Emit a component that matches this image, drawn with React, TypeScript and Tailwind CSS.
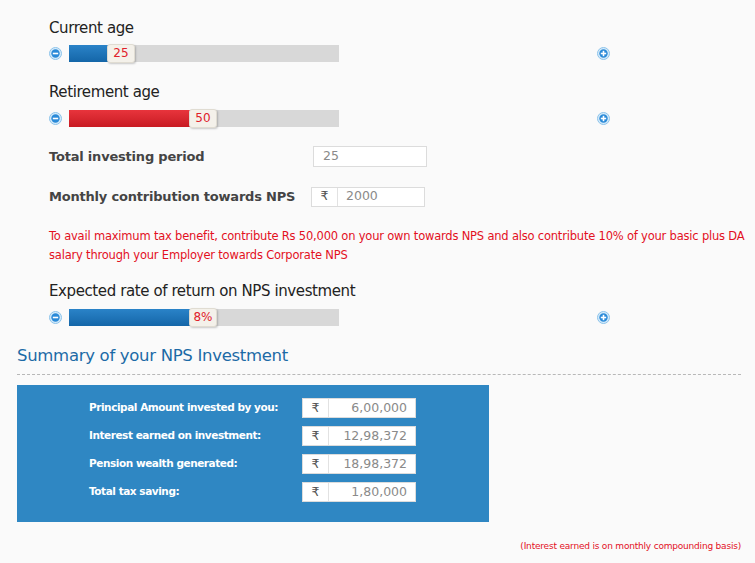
import React from 'react';

function MinusIcon() {
  return (
    <svg width="13" height="13" viewBox="0 0 13 13">
      <circle cx="6.5" cy="6.5" r="6" fill="#d6ebfa" stroke="#8cc3ea" />
      <circle cx="6.5" cy="6.5" r="4.2" fill="#2a8ad8" />
      <rect x="3.8" y="5.7" width="5.4" height="1.6" fill="#fff" />
    </svg>
  );
}

function PlusIcon() {
  return (
    <svg width="13" height="13" viewBox="0 0 13 13">
      <circle cx="6.5" cy="6.5" r="6" fill="#d6ebfa" stroke="#8cc3ea" />
      <circle cx="6.5" cy="6.5" r="4.2" fill="#2a8ad8" />
      <rect x="3.8" y="5.7" width="5.4" height="1.6" fill="#fff" />
      <rect x="5.7" y="3.8" width="1.6" height="5.4" fill="#fff" />
    </svg>
  );
}

interface SliderProps {
  fill: number;
  value: string;
  red?: boolean;
}

function Slider({ fill, value, red }: SliderProps) {
  return (
    <div className="flex items-center h-[18px]">
      <div className="w-[20px] flex items-center">
        <MinusIcon />
      </div>
      <div className="relative w-[270px] h-[17px] bg-[#d8d8d8]">
        <div
          className={
            red
              ? 'h-full bg-gradient-to-b from-[#e8343c] to-[#c81a22]'
              : 'h-full bg-gradient-to-b from-[#2a83c8] to-[#1466a8]'
          }
          style={{ width: fill }}
        />
        <div
          className="absolute top-[-1px] h-[19px] w-[28px] rounded-[3px] bg-[#f4f1ea] border border-[#e0dcd2] shadow-[1px_1px_2px_rgba(0,0,0,0.2)] flex items-center justify-center text-[12px] text-[#e0202a]"
          style={{ left: fill - 1 }}
        >
          {value}
        </div>
      </div>
      <div className="ml-[258px] flex items-center">
        <PlusIcon />
      </div>
    </div>
  );
}

function RupeeBox({ value, right }: { value: string; right?: boolean }) {
  return (
    <div className="flex h-[20px] w-[114px] bg-white border border-[#dcdcdc] text-[12.5px] text-[#8a8a8a]">
      <div className="w-[26px] flex items-center justify-center text-[#555] border-r border-[#e2e2e2]">₹</div>
      <div className={right ? 'flex-1 flex items-center justify-end pr-[8px]' : 'flex-1 flex items-center pl-[8px]'}>
        {value}
      </div>
    </div>
  );
}

const summary = [
  ['Principal Amount invested by you:', '6,00,000'],
  ['Interest earned on investment:', '12,98,372'],
  ['Pension wealth generated:', '18,98,372'],
  ['Total tax saving:', '1,80,000'],
];

export default function App() {
  return (
    <div className="w-[755px] h-[563px] bg-[#fafafa] text-[#222] font-['DejaVu_Sans',sans-serif] overflow-hidden">
      <div className="pl-[49px] pt-[18px]">
        <div className="text-[15px] leading-[20px] tracking-[-0.4px]">Current age</div>
        <div className="mt-[6px]">
          <Slider fill={39} value="25" />
        </div>

        <div className="mt-[20px] text-[15px] leading-[20px] tracking-[-0.4px]">Retirement age</div>
        <div className="mt-[7px]">
          <Slider fill={121} value="50" red />
        </div>

        <div className="mt-[19px] flex items-center h-[21px]">
          <div className="w-[264px] text-[13px] font-bold text-[#444] tracking-[-0.2px]">Total investing period</div>
          <div className="w-[114px] h-[21px] bg-white border border-[#dcdcdc] pl-[9px] flex items-center text-[12.5px] text-[#8a8a8a]">
            25
          </div>
        </div>

        <div className="mt-[19px] flex items-center h-[21px]">
          <div className="w-[262px] text-[13px] font-bold text-[#444] tracking-[-0.2px]">Monthly contribution towards NPS</div>
          <RupeeBox value="2000" />
        </div>

        <div className="mt-[20px] w-[704px] text-[11.5px] leading-[19px] text-[#e3101e] tracking-[-0.2px]">
          To avail maximum tax benefit, contribute Rs 50,000 on your own towards NPS and also contribute 10% of your basic plus DA salary through your Employer towards Corporate NPS
        </div>

        <div className="mt-[16px] text-[15px] leading-[20px] tracking-[-0.4px]">Expected rate of return on NPS investment</div>
        <div className="mt-[7px]">
          <Slider fill={121} value="8%" />
        </div>
      </div>

      <div className="px-[17px] mt-[19px]">
        <div className="text-[16.5px] leading-[22px] text-[#1c6aa6] tracking-[-0.3px]">Summary of your NPS Investment</div>
        <div className="mt-[7px] mr-[-3px] border-t border-dashed border-[#b8b8b8]" />
        <div className="mt-[10px] w-[472px] h-[137px] bg-[#2f87c3] pt-[13px] pl-[72px] flex flex-col gap-[8px]">
          {summary.map(([label, value]) => (
            <div key={label} className="flex items-center h-[20px]">
              <div className="w-[213px] whitespace-nowrap text-[10.5px] font-bold text-white tracking-[-0.45px]">{label}</div>
              <RupeeBox value={value} right />
            </div>
          ))}
        </div>
        <div className="mt-[18px] text-right mr-[-3px] text-[9px] text-[#e3101e] tracking-[-0.2px]">
          (Interest earned is on monthly compounding basis)
        </div>
      </div>
    </div>
  );
}
